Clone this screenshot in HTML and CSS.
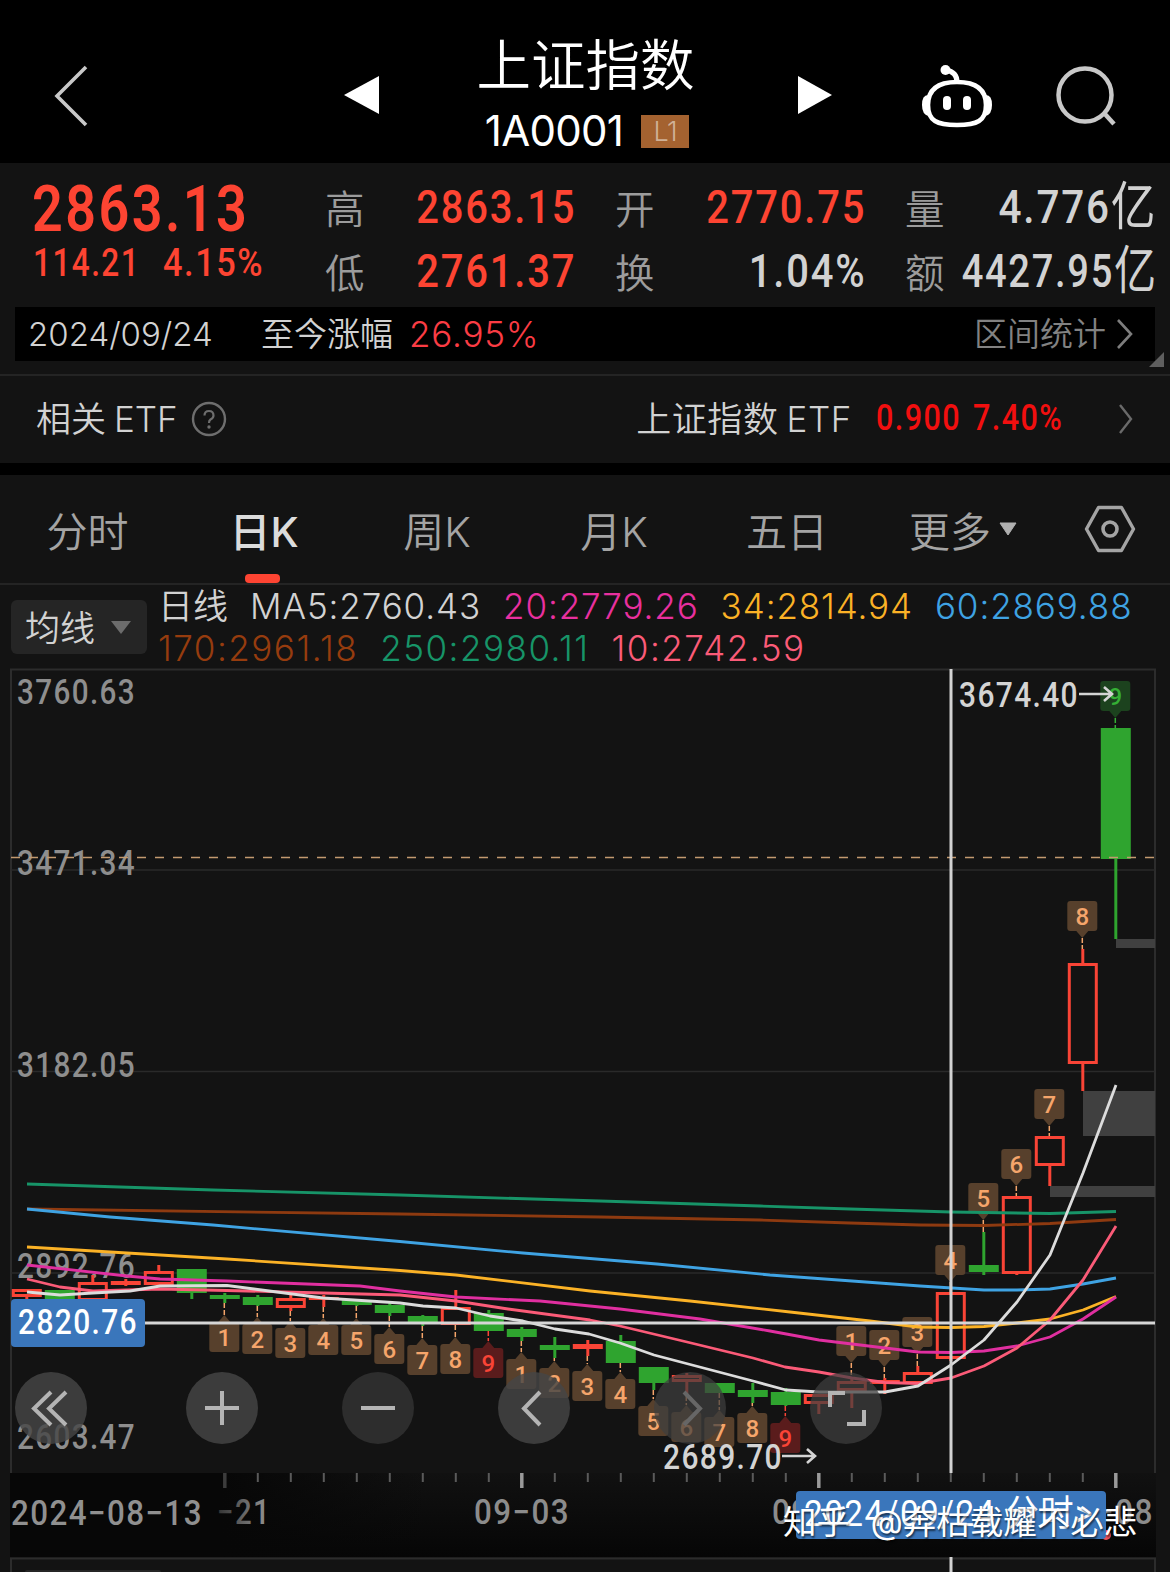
FILE: index.html
```html
<!DOCTYPE html>
<html lang="zh-CN">
<head>
    <meta charset="UTF-8">
    <meta name="viewport" content="width=device-width, initial-scale=1.0">
    <title>上证指数</title>
    <link rel="stylesheet" href="styles.css">
</head>
<body>
    <header class="header">
        <svg class="back" width="40" height="64" viewBox="0 0 40 64"><path d="M34 4L5 33L34 62" fill="none" stroke="#c8c8c8" stroke-width="3.6"/></svg>
        <svg class="prev" width="36" height="40" viewBox="0 0 36 40"><path d="M35 1V39L0 20Z" fill="#fff"/></svg>
        <div class="title">
            <div class="name">上证指数</div>
            <div class="code"><span>1A0001</span><span class="badge">L1</span></div>
        </div>
        <svg class="next" width="36" height="40" viewBox="0 0 36 40"><path d="M1 1V39L35 20Z" fill="#fff"/></svg>
        <svg class="robot" width="72" height="66" viewBox="0 0 72 66">
            <path d="M36 17C58 17 65 27 65 40C65 56 56 60 36 60C16 60 7 56 7 40C7 27 14 17 36 17Z" fill="none" stroke="#fff" stroke-width="4.600"/>
            <path d="M7 31Q2 31 2 40Q2 49 8 50M65 31Q70 31 70 40Q70 49 64 50" fill="#fff" stroke="#fff" stroke-width="2"/>
            <path d="M25 5Q36 7 36 17" fill="none" stroke="#fff" stroke-width="5"/>
            <circle cx="24.500" cy="5" r="5" fill="#fff"/>
            <rect x="22" y="31" width="8" height="14" rx="4" fill="#fff"/>
            <rect x="42" y="31" width="8" height="14" rx="4" fill="#fff"/>
        </svg>
        <svg class="search" width="62" height="62" viewBox="0 0 62 62"><circle cx="29" cy="30" r="26.500" fill="none" stroke="#c8c8c8" stroke-width="4.500"/><path d="M48 48L58 59" stroke="#c8c8c8" stroke-width="4.500"/></svg>
    </header>

    <section class="quote">
        <div class="last">
            <div class="price"><span class="num">2863.13</span></div>
            <div class="change"><span class="num diff">114.21</span><span class="num pct">4.15%</span></div>
        </div>
        <div class="cell"><span class="label">高</span><span class="num up">2863.15</span></div>
        <div class="cell"><span class="label">开</span><span class="num up">2770.75</span></div>
        <div class="cell"><span class="label">量</span><span class="num amount">4.776<span class="unit">亿</span></span></div>
        <div class="cell"><span class="label">低</span><span class="num up">2761.37</span></div>
        <div class="cell"><span class="label">换</span><span class="num">1.04%</span></div>
        <div class="cell"><span class="label">额</span><span class="num amount wide">4427.95<span class="unit">亿</span></span></div>
    </section>

    <div class="range-wrap">
        <div class="range">
            <span class="date">2024/09/24</span>
            <span class="since">至今涨幅</span>
            <span class="gain">26.95%</span>
            <span class="stat">区间统计</span>
            <svg width="18" height="30" viewBox="0 0 18 30"><path d="M2 1L15 15L2 29" fill="none" stroke="#7d7d7d" stroke-width="2.600"/></svg>
        </div>
        <span class="corner"></span>
    </div>

    <div class="etf">
        <span class="etf-label">相关<span class="latin">ETF</span></span>
        <svg class="help" width="36" height="36" viewBox="0 0 36 36"><circle cx="18" cy="18" r="16" fill="none" stroke="#6e6e6e" stroke-width="2.400"/><path d="M13.500 14.500Q13.500 10 18 10T22.500 14.500Q22.500 17 19.500 18.500Q18 19.500 18 22" fill="none" stroke="#6e6e6e" stroke-width="2.200"/><circle cx="18" cy="26" r="1.700" fill="#6e6e6e"/></svg>
        <span class="etf-name">上证指数<span class="latin">ETF</span></span>
        <span class="num etf-price">0.900</span>
        <span class="num etf-pct">7.40%</span>
        <svg class="go" width="16" height="30" viewBox="0 0 16 30"><path d="M2 1L13 15L2 29" fill="none" stroke="#6a6a6a" stroke-width="2.400"/></svg>
    </div>

    <nav class="tabs">
        <span class="tab">分时</span>
        <span class="tab active">日K</span>
        <span class="tab">周K</span>
        <span class="tab">月K</span>
        <span class="tab">五日</span>
        <span class="tab">更多<svg width="18" height="14" viewBox="0 0 18 14"><path d="M1 1H17L9 13Z" fill="#b0b0b0" stroke="#b0b0b0" stroke-linejoin="round"/></svg></span>
        <span class="tab"><svg width="52" height="48" viewBox="0 0 52 48"><path d="M14.500 2.500H37.500L49.500 24L37.500 45.500H14.500L2.500 24Z" fill="none" stroke="#a4a4a4" stroke-width="3.400" stroke-linejoin="round"/><circle cx="26" cy="24" r="7" fill="none" stroke="#a4a4a4" stroke-width="3.600"/></svg></span>
    </nav>

    <div class="legend">
        <div class="picker"><span>均线</span><svg width="20" height="13" viewBox="0 0 20 13"><path d="M0 0H20L10 13Z" fill="#6c6c6c"/></svg></div>
        <div class="ma">
            <div class="ma-row">
                <span class="kind">日线</span><span class="m5">MA5:2760.43</span><span class="m20">20:2779.26</span><span class="m34">34:2814.94</span><span class="m60">60:2869.88</span>
            </div>
            <div class="ma-row second">
                <span class="m170">170:2961.18</span><span class="m250">250:2980.11</span><span class="m10">10:2742.59</span>
            </div>
        </div>
    </div>

    <main class="chart">
        <svg id="kline" width="1170" height="904" viewBox="0 668 1170 904"></svg>
        <div class="tools">
            <button class="tool"><svg viewBox="0 0 72 72"><path d="M36 20L19 36.500L36 53M51 20L34 36.500L51 53"/></svg></button>
            <button class="tool"><svg viewBox="0 0 72 72"><path d="M36 19V53M19 36H53"/></svg></button>
            <button class="tool off"><svg viewBox="0 0 72 72"><path d="M19 36H53"/></svg></button>
            <button class="tool"><svg viewBox="0 0 72 72"><path d="M42 20L26 36.500L42 53"/></svg></button>
            <button class="tool dim"><svg viewBox="0 0 72 72"><path d="M30 20L46 36.500L30 53"/></svg></button>
            <button class="tool"><svg viewBox="0 0 72 72"><path d="M20 35V21H35M54 38V52H37"/></svg></button>
        </div>
        <div class="watermark">知乎 @奔枯载耀不必悲</div>
    </main>

    <script src="chart.js"></script>
</body>
</html>
```

FILE: styles.css
```css
body {
    width: 1170px;
    height: 1572px;
    margin: 0;
    overflow: hidden;
    background-color: #131313;
    color: #d2d2d2;
    font-family: Inter, "Noto Sans CJK SC", sans-serif;
}

svg {
    display: block;
    flex: none;
}

/* header */
.header {
    display: flex;
    height: 163px;
    background-color: #000;
    color: #fff;
}

.back {
    margin: 63px 0 0 52px;
}

.prev {
    margin: 75px 0 0 252px;
}

.title {
    width: 411px;
    padding-top: 26px;
    text-align: center;
}

.name {
    height: 77px;
    font-size: 54.5px;
    line-height: 78px;
    font-weight: 350;
}

.code {
    display: flex;
    justify-content: center;
    align-items: center;
    height: 54px;
    margin-left: 3px;
    font-size: 42px;
    letter-spacing: -0.7px;
}

.badge {
    width: 48px;
    height: 33px;
    margin: 2px 0 0 18px;
    background-color: #a46230;
    color: #d0b196;
    font-size: 27px;
    line-height: 33px;
    font-weight: 300;
}

.next {
    margin: 75px 0 0 6px;
}

.robot {
    margin: 65px 0 0 88px;
}

.search {
    margin: 65px 0 0 63px;
}

/* quote */
.num {
    display: inline-block;
    font-family: Roboto, "Noto Sans CJK SC", sans-serif;
    font-weight: 500;
    letter-spacing: 0.045em;
    transform: scaleX(0.85);
    transform-origin: left;
    white-space: nowrap;
}

.quote {
    display: grid;
    grid-template-columns: 252px 250px 250px 250px;
    grid-template-rows: 64px 64px;
    column-gap: 40px;
    width: 1170px;
    height: 144px;
    padding: 7px 0 0 33px;
    box-sizing: border-box;
}

.last {
    grid-row: span 2;
    color: #fd4432;
}

.price {
    height: 73px;
    font-size: 65px;
    line-height: 75px;
}

.price .num {
    margin-left: -1px;
    font-weight: 600;
    transform: scaleX(0.83);
}

.change {
    display: flex;
    height: 40px;
    font-size: 39px;
    line-height: 40px;
}

.change .diff {
    width: 130px;
    transform: scaleX(0.81);
}

.change .pct {
    transform: scaleX(0.88);
}

.cell {
    display: flex;
    justify-content: space-between;
    height: 64px;
    line-height: 74px;
    font-size: 47px;
}

.cell .num {
    margin-right: -1px;
    transform-origin: right;
}

.cell .amount {
    margin-right: -1px;
    transform: scaleX(0.86);
}

.cell .wide {
    margin-left: -40px;
    transform: scaleX(0.81);
}

.unit {
    font-size: 52px;
    line-height: 1;
    letter-spacing: 0;
    font-weight: 400;
    vertical-align: -2px;
}

.label {
    padding-top: 3px;
    color: #9c9c9c;
    font-size: 39.5px;
    font-weight: 350;
}

.up {
    color: #fd4432;
}

/* selected day */
.range-wrap {
    position: relative;
    height: 67px;
    padding: 0 15px;
    border-bottom: 2px solid #242424;
}

.range {
    display: flex;
    align-items: center;
    height: 54px;
    padding: 0 21px 0 13px;
    background-color: #000;
    font-size: 33px;
    line-height: 50px;
    font-weight: 350;
}

.range span {
    padding-bottom: 1px;
}

.date {
    width: 233px;
}

.since {
    width: 148px;
}

.gain {
    color: #fb3c44;
    font-size: 35px;
    letter-spacing: 0.8px;
}

.stat {
    margin-left: auto;
    margin-right: 10px;
    color: #828282;
}

.corner {
    position: absolute;
    left: 1149px;
    top: 45px;
    border-left: 15px solid transparent;
    border-bottom: 15px solid #5f5f5f;
}

/* related etf */
.etf {
    display: flex;
    align-items: center;
    height: 85px;
    padding: 0 36px 2px;
    border-bottom: 12px solid #000;
    font-size: 35px;
    font-weight: 350;
}

.etf-label,
.etf-name {
    padding-bottom: 4px;
}

.latin {
    margin-left: 8px;
}

.help {
    margin-left: 13px;
}

.etf-name {
    margin-left: auto;
    letter-spacing: 0.6px;
}

.etf-price,
.etf-pct {
    padding-bottom: 2px;
    color: #f20f0f;
    font-size: 36px;
}

.etf-price {
    margin-left: 24px;
}

.etf-pct {
    margin-left: -3px;
}

.go {
    margin-left: 39px;
}

/* period tabs */
.tabs {
    display: grid;
    grid-template-columns: 175px 178px 168px 186px 160px 192px 101px;
    height: 108px;
    border-bottom: 2px solid #242424;
    color: #a4a4a4;
    font-size: 41px;
    font-weight: 350;
}

.tab {
    position: relative;
    display: flex;
    align-items: center;
    justify-content: center;
    height: 108px;
}

.tab svg {
    margin-left: 8px;
}

.tab:last-child svg {
    margin-left: 0;
}

.active {
    color: #dcdcdc;
    font-weight: 500;
}

.active::after {
    content: "";
    position: absolute;
    left: 70px;
    bottom: 0;
    width: 35px;
    height: 9px;
    border-radius: 4px;
    background-color: #fd4432;
}

/* moving averages */
.legend {
    display: flex;
    height: 83px;
    font-size: 35px;
    font-weight: 350;
}

.picker {
    display: flex;
    flex: none;
    align-items: center;
    justify-content: space-between;
    width: 106px;
    height: 54px;
    margin: 15px 0 0 11px;
    padding: 0 16px 0 14px;
    border-radius: 6px;
    background-color: #252525;
}

.picker span {
    padding-bottom: 4px;
}

.ma {
    padding-left: 11px;
}

.ma-row {
    display: flex;
    height: 42px;
    line-height: 42px;
    white-space: nowrap;
    letter-spacing: 0.9px;
}

.ma-row.second {
    letter-spacing: 1.5px;
}

.ma-row span {
    margin-right: 22px;
}

.ma-row .kind {
    letter-spacing: 0;
}

.m20 { color: #e8309f; }
.m34 { color: #fbb226; }
.m60 { color: #3fa3e3; }
.m170 { color: #963c0e; }
.m250 { color: #179468; }
.m10 { color: #fb5b78; }

/* chart */
.chart {
    position: relative;
    height: 904px;
}

.chart text {
    font-family: Roboto, "Noto Sans CJK SC", sans-serif;
}

.tools {
    position: absolute;
    left: 15px;
    top: 704px;
    display: flex;
    gap: 84px;
}

.tool {
    width: 72px;
    height: 72px;
    padding: 0;
    border: none;
    border-radius: 50%;
    background-color: rgba(70, 70, 70, 0.82);
}

.tool:first-child {
    margin-right: 15px;
}

.tool path {
    fill: none;
    stroke: #b4b4b4;
    stroke-width: 4;
}

.tool.off {
    background-color: #2d2d2d;
}

.tool.dim,
.tool:last-child {
    background-color: rgba(62, 62, 62, 0.72);
}

.tool.dim path {
    stroke: #666;
}

.watermark {
    position: absolute;
    left: 783px;
    top: 830px;
    color: #fff;
    font-size: 33.5px;
    line-height: 48px;
    word-spacing: 11px;
    white-space: nowrap;
    text-shadow: 1px 2px 2px rgba(0, 0, 0, 0.6);
}
```

FILE: chart.js
```javascript
const RED = '#f94436';
const GREEN = '#2fa42f';
const STEP = 33;
const X0 = 26.8;

// [colour, body top, body bottom, wick top, wick bottom]
const candles = [
    ['r', 1289, 1297, 1289, 1299], ['g', 1290, 1301, 1290, 1303], ['r', 1282, 1301, 1275, 1303],
    ['r', 1281, 1285, 1279, 1286], ['r', 1271, 1285, 1265, 1285], ['g', 1269, 1293, 1269, 1299],
    ['g', 1295, 1299, 1293, 1303], ['g', 1297, 1305, 1295, 1306], ['r', 1298, 1308, 1295, 1311],
    ['r', 1297, 1300, 1295, 1307], ['g', 1300, 1305, 1300, 1306], ['g', 1305, 1313, 1302, 1316],
    ['g', 1316, 1324, 1315, 1326], ['r', 1307, 1325, 1290, 1325], ['g', 1313, 1331, 1310, 1331],
    ['g', 1329, 1337, 1327, 1341], ['g', 1345, 1350, 1337, 1358], ['r', 1344, 1349, 1340, 1356],
    ['g', 1341, 1363, 1335, 1363], ['g', 1367, 1383, 1367, 1390], ['r', 1375, 1382, 1373, 1396],
    ['g', 1383, 1393, 1383, 1393], ['g', 1390, 1397, 1383, 1403], ['g', 1392, 1405, 1388, 1406],
    ['r', 1394, 1404, 1394, 1414], ['r', 1381, 1391, 1378, 1408], ['r', 1380, 1384, 1378, 1394],
    ['r', 1372, 1384, 1366, 1384], ['r', 1292, 1359, 1292, 1361], ['g', 1265, 1272, 1232, 1275],
    ['r', 1196, 1274, 1196, 1275], ['r', 1136, 1166, 1136, 1186], ['r', 963, 1064, 949, 1091],
    ['g', 728, 859, 728, 939]
];

// [candle, label, box top, side of the pointer]
const marks = [
    [6, 1, 1322, 'u'], [7, 2, 1324, 'u'], [8, 3, 1328, 'u'], [9, 4, 1325, 'u'], [10, 5, 1325, 'u'],
    [11, 6, 1334, 'u'], [12, 7, 1345, 'u'], [13, 8, 1344, 'u'], [14, 9, 1348, 'u'], [15, 1, 1359, 'u'],
    [16, 2, 1368, 'u'], [17, 3, 1371, 'u'], [18, 4, 1379, 'u'], [19, 5, 1406, 'u'], [20, 6, 1412, 'u'],
    [21, 7, 1417, 'u'], [22, 8, 1413, 'u'], [23, 9, 1423, 'u'],
    [25, 1, 1326, 'd'], [26, 2, 1330, 'd'], [27, 3, 1317, 'd'], [28, 4, 1245, 'd'], [29, 5, 1183, 'd'],
    [30, 6, 1149, 'd'], [31, 7, 1089, 'd'], [32, 8, 901, 'd'], [33, 9, 681, 'd']
];

const averages = {
    '#179468': '27,1184 213,1190 400,1195 600,1201 760,1206 850,1209 951,1212 1050,1213.500 1116,1211.500',
    '#8e3a10': '27,1209 400,1214 600,1217 760,1220 850,1223 920,1225 984,1225.500 1050,1223.500 1116,1219.500',
    '#3fa3e3': '27,1209 110,1217 213,1225 400,1241.500 523,1253 657,1264 770,1275 852,1281 920,1286 984,1290 1017,1290 1050,1289 1083,1284 1116,1278',
    '#fbb226': '27,1247 227,1259 400,1270.500 456,1275 590,1291 690,1301 790,1312 870,1321 918,1327 951,1327.500 984,1326.500 1017,1323 1050,1319 1083,1310 1116,1296.500',
    '#e02fa0': '27,1265 127,1276 160,1279 227,1281 360,1286 400,1291 456,1297 540,1301 620,1309 700,1319 770,1331 819,1340 885,1348 918,1352 951,1352.500 984,1351 1017,1346 1050,1337 1083,1319 1116,1297',
    '#fb5b78': '27,1279 60,1287 93,1291 160,1289 227,1290.500 323,1293 400,1295 456,1301 508,1309 590,1320 620,1326 687,1342 753,1358 785,1367 819,1372 852,1378 885,1382.500 918,1383.500 951,1378 984,1366 1017,1348 1050,1320 1083,1280 1116,1226',
    '#dcdcdc': '27,1292 60,1295 93,1293 130,1291 160,1286 227,1285.500 323,1298 400,1303 423,1306 456,1308 490,1316 523,1321 555,1329 589,1334 620,1343 654,1355 753,1381 786,1390 819,1392 885,1392 918,1386 951,1365 984,1340 1017,1302 1050,1255 1083,1173 1116,1085'
};

const line = (x1, y1, x2, y2, color, w, extra = '') =>
    `<line x1="${x1}" y1="${y1}" x2="${x2}" y2="${y2}" stroke="${color}" stroke-width="${w}" ${extra}/>`;
const rect = (x, y, w, h, fill, extra = '') =>
    `<rect x="${x}" y="${y}" width="${w}" height="${h}" fill="${fill}" ${extra}/>`;
// text squeezed to the width of the narrow digits
const text = (x, y, w, str, color, size = 35, weight = 500) =>
    `<text x="${x}" y="${y}" textLength="${w + 1}" lengthAdjust="spacingAndGlyphs" letter-spacing="1.6" font-size="${size}" font-weight="${weight}" fill="${color}">${str}</text>`;

let out = `<defs>
    <linearGradient id="axis" x1="0" y1="0" x2="0" y2="1"><stop offset="0" stop-color="#111"/><stop offset="1" stop-color="#060606"/></linearGradient>
    <linearGradient id="fade"><stop offset="0" stop-color="#333"/><stop offset="1" stop-color="#999"/></linearGradient>
    <linearGradient id="left"><stop offset="0.5" stop-color="#070707"/><stop offset="1" stop-color="#070707" stop-opacity="0"/></linearGradient>
</defs>`;

// frame and grid
out += rect(10, 1473, 1146, 84, 'url(#axis)') + rect(10, 1473, 420, 84, 'url(#left)');
out += line(10, 669.5, 1156, 669.5, '#2c2c2c', 2) + line(11, 669, 11, 1473, '#2c2c2c', 2) + line(1155, 669, 1155, 1473, '#2c2c2c', 2);
[870, 1071.5, 1273].forEach(y => { out += line(11, y, 1155, y, '#2a2a2a', 1.5); });
out += rect(1116, 939, 39, 9, '#404040') + rect(1083, 1091, 72, 45, '#404040') + rect(1050, 1186, 105, 11, '#404040');

// price labels
[['3760.63', 704], ['3471.34', 875], ['3182.05', 1077], ['2892.76', 1278], ['2603.47', 1449]].forEach(([s, y]) => {
    out += text(17, y, 118, s, '#8e8e8e');
});

// candles
candles.forEach(([c, top, bottom, high, low], i) => {
    const x = X0 + STEP * i;
    const color = c === 'r' ? RED : GREEN;
    if (high < top) out += line(x, high, x, top, color, 3);
    if (low > bottom) out += line(x, bottom, x, low, color, 3);
    if (c === 'g' || bottom - top < 6) {
        out += rect(x - 15, top, 30, bottom - top, color);
    } else {
        out += rect(x - 13.5, top + 1.5, 27, bottom - top - 3, 'none', `stroke="${color}" stroke-width="3"`);
    }
});

// nine-turn marks
marks.forEach(([i, n, y, side]) => {
    const x = X0 + STEP * i - 0.5;
    let fill = '#57402c', ink = '#f5a56b';
    if (n === 9) {
        fill = side === 'u' ? '#5a1c1c' : '#1c421e';
        ink = side === 'u' ? '#f94436' : '#35b035';
    }
    const [, top, , high, low] = candles[i];
    if (side === 'u') {
        out += line(x, low, x, y - 7, ink, 1.5, 'stroke-dasharray="5 2"');
        out += `<path d="M${x - 6} ${y}L${x} ${y - 7}L${x + 6} ${y}Z" fill="${fill}"/>`;
    } else {
        out += line(x, y + 37, x, Math.min(high, top), ink, 1.5, 'stroke-dasharray="5 2"');
        out += `<path d="M${x - 6} ${y + 30}L${x} ${y + 37}L${x + 6} ${y + 30}Z" fill="${fill}"/>`;
    }
    out += rect(x - 15, y, 30, 30, fill, 'rx="3"');
    out += `<text x="${x}" y="${y + 24}" text-anchor="middle" font-size="24" font-weight="500" fill="${ink}">${n}</text>`;
});

Object.entries(averages).forEach(([color, points]) => {
    out += `<polyline points="${points}" fill="none" stroke="${color}" stroke-width="2.8" stroke-linejoin="round"/>`;
});

// high and low
out += text(959, 707, 119, '3674.40', '#d4d4d4') + text(663, 1469, 119, '2689.70', '#d4d4d4');
[[1079, 694], [782, 1456]].forEach(([x, y]) => {
    out += `<path d="M${x} ${y}H${x + 32}M${x + 25} ${y - 7}L${x + 33} ${y}L${x + 25} ${y + 7}" fill="none" stroke="#d4d4d4" stroke-width="2.6"/>`;
});

// last price and crosshair
out += line(11, 857.5, 1154, 857.5, '#c39a70', 1.5, 'stroke-dasharray="9 9"');
out += line(145, 1323, 1155, 1323, '#d6d6d6', 3) + line(951, 669, 951, 1473, '#d2d2d2', 3);
out += rect(11, 1299, 134, 48, '#3a76bb', 'rx="4"') + text(18, 1334, 119, '2820.76', '#fff');

// time axis
for (let i = 6; i < 34; i++) {
    const x = X0 + STEP * i;
    const major = (i - 6) % 9 === 0;
    out += major ? line(x, 1473, x, 1488, i === 6 ? '#3c3c3c' : '#9a9a9a', 3.5) : line(x, 1473, x, 1482, '#5a5a5a', 2);
}
out += text(11, 1525, 191, '2024−08−13', '#909090') + text(217, 1524, 53, '−21', 'url(#fade)');
out += text(474, 1524, 95, '09−03', '#8c8c8c') + text(772, 1524, 95, '09−18', '#8c8c8c') + text(1057, 1524, 96, '10−08', '#8c8c8c');
out += '<circle cx="1106" cy="1535" r="5" fill="#f0505a"/>';
out += rect(796, 1491, 310, 48, '#3a76bb', 'rx="4"') + text(804, 1526, 289, '2024/09/24 分时&gt;', '#fff', 36, 400);

// next pane
out += line(10, 1558.5, 1156, 1558.5, '#2c2c2c', 2) + line(11, 1558, 11, 1572, '#2c2c2c', 2) + line(1155, 1558, 1155, 1572, '#2c2c2c', 2);
out += line(951, 1557, 951, 1572, '#d2d2d2', 3) + rect(25, 1570, 136, 6, '#252525', 'rx="2"');

document.getElementById('kline').innerHTML = out;
```
